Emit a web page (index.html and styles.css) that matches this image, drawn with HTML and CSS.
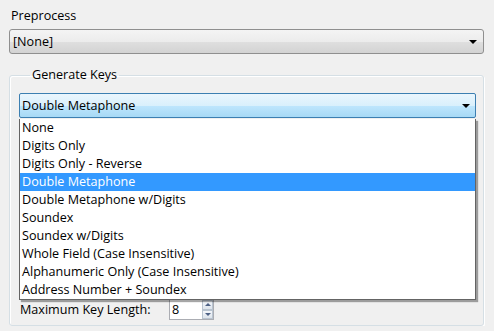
FILE: index.html
```html
<!DOCTYPE html>
<html lang="en">
<head>
    <meta charset="UTF-8">
    <title>Key Generation Settings</title>
    <link rel="stylesheet" href="styles.css">
</head>
<body>
    <div class="panel">
        <div class="field-label">Preprocess</div>
        <div class="combo">
            <span class="combo-text">[None]</span>
            <span class="combo-arrow"></span>
        </div>

        <fieldset class="group">
            <legend>Generate Keys</legend>
            <div class="combo-wrap">
                <div class="combo combo-active">
                    <span class="combo-text">Double Metaphone</span>
                    <span class="combo-arrow"></span>
                </div>
                <ul class="dropdown">
                    <li>None</li>
                    <li>Digits Only</li>
                    <li>Digits Only - Reverse</li>
                    <li class="selected">Double Metaphone</li>
                    <li>Double Metaphone w/Digits</li>
                    <li>Soundex</li>
                    <li>Soundex w/Digits</li>
                    <li>Whole Field (Case Insensitive)</li>
                    <li>Alphanumeric Only (Case Insensitive)</li>
                    <li>Address Number + Soundex</li>
                </ul>
            </div>

            <div class="key-length">
                <span class="key-label">Maximum Key Length:</span>
                <div class="spinbox">
                    <span class="spin-value">8</span>
                    <div class="spin-buttons">
                        <span class="spin-btn"><span class="spin-up"></span></span>
                        <span class="spin-btn"><span class="spin-down"></span></span>
                    </div>
                </div>
            </div>
        </fieldset>
    </div>
</body>
</html>
```

FILE: styles.css
```css
body {
    margin: 0;
    background-color: #f0f0f0;
    font-family: "Open Sans", "Noto Sans", sans-serif;
    font-size: 12.6px;
    color: #000;
}

.panel {
    padding: 8px 10px 0 9px;
}

.field-label {
    height: 16px;
    line-height: 16px;
    padding-left: 2px;
    margin-bottom: 5px;
}

.combo {
    display: flex;
    align-items: center;
    height: 23px;
    border: 1px solid #8f8f8f;
    border-radius: 3px;
    background: linear-gradient(#f4f4f4 0%, #ececec 50%, #dfdfdf 51%, #d3d3d3 100%);
    padding: 0 3px;
}

.combo-text {
    flex: 1;
}

.combo-arrow {
    width: 0;
    height: 0;
    border-left: 4px solid transparent;
    border-right: 4px solid transparent;
    border-top: 4px solid #000;
    margin-right: 3px;
}

.combo-active {
    border-color: #3c7fb1;
    border-radius: 2px;
    padding: 0 2px;
    background: linear-gradient(#eaf6fd 0%, #d9f0fc 50%, #bee6fd 51%, #a7d9f5 100%);
}

.group {
    margin: 13px 0 0 0;
    padding: 10px 7px 5px 9px;
    height: 242px;
    border: 1px solid #d5dfe5;
    border-radius: 3px;
    box-shadow: inset 1px 1px 0 #fff, 1px 1px 0 #fff;
    display: flex;
    flex-direction: column;
}

.group legend {
    padding: 0 2px;
    margin-left: 11px;
    height: 16px;
    line-height: 16px;
}

.combo-wrap {
    position: relative;
}

.dropdown {
    position: absolute;
    left: 0;
    right: 0;
    top: 26px;
    margin: 0;
    padding: 0;
    list-style: none;
    background-color: #fff;
    border: 1px solid #646464;
    border-top: none;
    box-shadow: 2px 2px 1px rgba(0, 0, 0, 0.35);
    z-index: 2;
}

.dropdown li {
    height: 18px;
    line-height: 18px;
    padding-left: 2px;
}

.dropdown li.selected {
    background-color: #3399ff;
    color: #fff;
}

.key-length {
    margin-top: auto;
    display: flex;
    align-items: center;
    padding-left: 1px;
}

.key-label {
    width: 149px;
}

.spinbox {
    display: flex;
    width: 45px;
    height: 21px;
    box-sizing: border-box;
    border: 1px solid #abadb3;
    background-color: #fff;
}

.spin-value {
    flex: 1;
    line-height: 19px;
    padding-left: 2px;
}

.spin-buttons {
    display: flex;
    flex-direction: column;
    width: 11px;
}

.spin-btn {
    flex: 1;
    display: flex;
    align-items: center;
    justify-content: center;
    border: 1px solid #b9c4d0;
    background: linear-gradient(#f4f7fb, #dde4ec);
}

.spin-up, .spin-down {
    width: 0;
    height: 0;
    border-left: 3px solid transparent;
    border-right: 3px solid transparent;
}

.spin-up {
    border-bottom: 3px solid #4d6185;
}

.spin-down {
    border-top: 3px solid #4d6185;
}
```
